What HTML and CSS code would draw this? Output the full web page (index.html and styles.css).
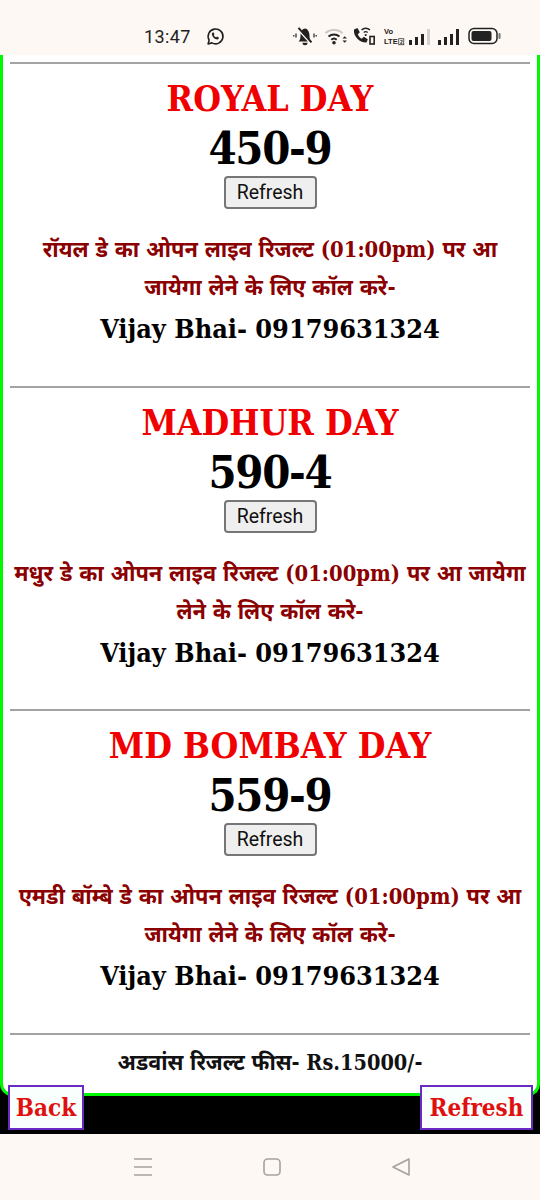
FILE: index.html
```html
<!DOCTYPE html>
<html lang="hi">
<head>
<meta charset="utf-8">
<title>Result</title>
<link rel="stylesheet" href="styles.css">
</head>
<body>
<div class="phone">
  <header class="status">
    <span class="time">13:47</span>
    <svg class="wa" viewBox="0 0 20 20" width="19" height="19"><path d="M2.2 17.800l1.100-4A7.800 7.800 0 1 1 6.200 16.700z" fill="none" stroke="#222" stroke-width="1.700" stroke-linejoin="round"/><path d="M7 5.800c-.8.700-1 1.700-.6 2.800.7 2 2.300 3.500 4.300 4.300 1.100.4 2.100.1 2.800-.8l-.3-1.300-1.700-.8-.8 1c-1.200-.5-2.100-1.400-2.600-2.500l.8-.9-.7-1.700z" fill="#222"/></svg>
    <span class="status-icons">
      <svg class="si-bell" viewBox="0 0 24 20" width="24" height="20"><path d="M5.500 15.500c1.200-1 2-2.500 2-6S9.500 2.500 12 2.500s4.500 3.500 4.500 7 .8 5 2 6z M9.500 16.800a2.500 2.500 0 0 0 5 0z" fill="#222"/><path d="M5.500 3.800l13 14.500" stroke="#fdf8f3" stroke-width="1.800"/><path d="M5.500 1.800l13 14.500" stroke="#222" stroke-width="2"/><path d="M3 7.500v4M.8 9v1.500M21 7.500v4M23.200 9v1.500" stroke="#222" stroke-width="1.200"/></svg>
      <svg class="si-wifi" viewBox="0 0 22 20" width="22" height="20"><path d="M0.500 7a13 13 0 0 1 17 0" fill="none" stroke="#c9c6c2" stroke-width="1.900"/><path d="M3.500 10.500a8.500 8.500 0 0 1 11 0M6.300 13.800a4 4 0 0 1 5.400 0" fill="none" stroke="#222" stroke-width="1.900"/><circle cx="9" cy="16.800" r="1.800" fill="#222"/><path d="M17.500 12.500l2.200-2.200 2.200 2.200zM17.500 14.500l2.200 2.200 2.200-2.200z" fill="#222"/></svg>
      <svg class="si-call" viewBox="0 0 22 20" width="22" height="20"><path d="M1 3.500l3.500-1.500 2.300 4.200-2 2c.8 2 2.200 3.500 4 4.500l2-2 4 2.500-1.300 3.300c-6.500.5-13.500-6-12.500-13z" fill="#222"/><path d="M8.500 4a6 6 0 0 1 8.500 0M10.700 6.500a3 3 0 0 1 4 0" fill="none" stroke="#222" stroke-width="1.300"/><circle cx="12.700" cy="9" r="1.100" fill="#222"/><rect x="17" y="10.500" width="4.200" height="7.500" fill="none" stroke="#222" stroke-width="1.600"/></svg>
      <span class="volte"><span>Vo</span><span>LTE<i>2</i></span></span>
      <span class="bars"><i class="b1"></i><i class="b2"></i><i class="b3"></i><i class="b4 off"></i></span>
      <span class="bars bars-full"><i class="b1"></i><i class="b2"></i><i class="b3"></i><i class="b4"></i></span>
      <svg class="si-batt" viewBox="0 0 33 18" width="33" height="18"><rect x="1" y="1.500" width="28" height="15" rx="5" fill="none" stroke="#222" stroke-width="1.500"/><rect x="3.500" y="4" width="20" height="10" rx="2" fill="#222"/><path d="M31.500 7v4" stroke="#777" stroke-width="2" stroke-linecap="round"/></svg>
    </span>
  </header>

  <main class="web">
    <div class="card">
      <section class="result">
        <hr class="rule">
        <h2 class="name">ROYAL DAY</h2>
        <div class="number">450-9</div>
        <button class="reload" type="button">Refresh</button>
        <p class="note">रॉयल डे का ओपन लाइव रिजल्ट (01:00pm) पर आ जायेगा लेने के लिए कॉल करे-</p>
        <p class="contact">Vijay Bhai- 09179631324</p>
      </section>
      <section class="result">
        <hr class="rule">
        <h2 class="name">MADHUR DAY</h2>
        <div class="number">590-4</div>
        <button class="reload" type="button">Refresh</button>
        <p class="note">मधुर डे का ओपन लाइव रिजल्ट (01:00pm) पर आ जायेगा लेने के लिए कॉल करे-</p>
        <p class="contact">Vijay Bhai- 09179631324</p>
      </section>
      <section class="result">
        <hr class="rule">
        <h2 class="name">MD BOMBAY DAY</h2>
        <div class="number">559-9</div>
        <button class="reload" type="button">Refresh</button>
        <p class="note">एमडी बॉम्बे डे का ओपन लाइव रिजल्ट (01:00pm) पर आ जायेगा लेने के लिए कॉल करे-</p>
        <p class="contact">Vijay Bhai- 09179631324</p>
      </section>
      <hr class="rule">
      <p class="fee">अडवांस रिजल्ट फीस- Rs.15000/-</p>
    </div>
    <a class="float float-back" href="#">Back</a>
    <a class="float float-refresh" href="#">Refresh</a>
  </main>

  <nav class="sysnav">
    <svg viewBox="0 0 20 20" width="20" height="20"><path d="M1 2h18M1 10h18M1 18h18" stroke="#a5a19c" stroke-width="1.500"/></svg>
    <svg viewBox="0 0 20 20" width="20" height="20"><rect x="2" y="2" width="16" height="16" rx="3.500" fill="none" stroke="#a5a19c" stroke-width="1.600"/></svg>
    <svg viewBox="0 0 20 20" width="20" height="20"><path d="M2 10L18 2v16z" fill="none" stroke="#a5a19c" stroke-width="1.600" stroke-linejoin="round"/></svg>
  </nav>
</div>
</body>
</html>
```

FILE: styles.css
```css
* { box-sizing: border-box; }
html, body { margin: 0; padding: 0; }
body { background: #fdf8f3; font-family: "DejaVu Serif", "Noto Sans", serif; font-stretch: condensed; }
.phone { width: 540px; height: 1200px; display: flex; flex-direction: column; overflow: hidden; }

.status { height: 55px; flex: none; background: #fdf8f3; display: flex; align-items: center; padding: 17px 39px 0 144px; }
.time { font: 400 18px "Roboto", sans-serif; color: #222; letter-spacing: .4px; width: 62px; }
.wa { flex: none; }
.status-icons { margin-left: auto; display: flex; align-items: center; }
.si-wifi { margin-left: 8px; }
.si-call { margin-left: 6px; }
.volte { margin-left: 9px; width: 22px; display: flex; flex-direction: column; font: 700 10.500px/12.500px "Liberation Sans", sans-serif; color: #222; white-space: nowrap; transform: scale(.72, .75); transform-origin: left center; }
.volte i { font-style: normal; font-size: 7px; border: 1px solid #222; margin-left: 1px; padding: 0 1px; }
.bars { display: flex; align-items: flex-end; gap: 3px; height: 17px; margin-left: 3px; width: 21px; }
.bars-full { margin-left: 8px; }
.si-batt { margin-left: 9px; }
.bars i { width: 3px; background: #222; }
.bars .b1 { height: 5px; } .bars .b2 { height: 8px; } .bars .b3 { height: 11px; } .bars .b4 { height: 16px; }
.bars .off { background: #d5d2ce; }

.web { flex: none; height: 1079px; background: #000; position: relative; overflow: hidden; }
.card { height: 1041px; background: #fff; border: 3px solid #00f800; border-top: 0; border-radius: 0 0 12px 12px; padding: 7px 7px 0; text-align: center; overflow: hidden; }
.rule { margin: 0; height: 2px; border: 0; background: #a3a3a3; }
.result { height: 323.500px; display: flex; flex-direction: column; align-items: center; }
.result .rule { align-self: stretch; flex: none; }
.name { margin: 14px 0 0; font: 700 35.500px/42px "DejaVu Serif", serif; font-stretch: condensed; color: #f00000; }
.number { margin-top: 2px; font: 700 45px/54px "DejaVu Serif", serif; font-stretch: condensed; letter-spacing: -1.300px; color: #000; }
.reload { margin-top: 0; width: 93px; height: 33px; padding: 0; font: 400 19.500px "Roboto", sans-serif; color: #111; background: #efefef; border: 2px solid #767676; border-radius: 4px; }
.note { margin: 22px 0 0; max-width: 514px; font: 700 21.800px/38px "DejaVu Serif", "Noto Sans", serif; font-stretch: condensed; color: #8b0000; }
.contact { margin: 2px 0 0; font: 700 26.800px/40px "DejaVu Serif", serif; font-stretch: condensed; color: #000; }
.fee { margin: 13px 0 0; font: 700 21.500px/30px "DejaVu Serif", "Noto Sans", serif; font-stretch: condensed; color: #111; }

.float { position: absolute; top: 1030px; height: 45px; display: flex; align-items: center; justify-content: center; background: #f8fffc; border: 2px solid #6a2bc4; color: #e01010; font: 700 24px "DejaVu Serif", serif; font-stretch: condensed; text-decoration: none; }
.float-back { left: 8px; width: 76px; }
.float-refresh { left: 420px; width: 113px; }

.sysnav { flex: 1; background: #fdf8f3; display: flex; justify-content: space-between; align-items: center; padding: 0 129px 0 133px; }
```
